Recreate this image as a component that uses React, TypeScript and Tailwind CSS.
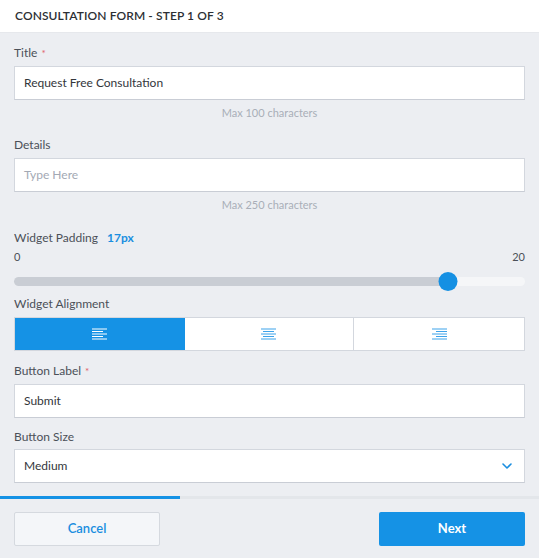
// Consultation form – step 1 of 3

const FONT = { fontFamily: 'Lato, "Open Sans", Arial, sans-serif' };

function AlignIcon({ mode, color }: { mode: 'left' | 'center' | 'right'; color: string }) {
  const short = 11;
  const full = 15;
  const x1 = mode === 'left' ? 0 : mode === 'center' ? (full - short) / 2 : full - short;
  const ys = [1, 3.5, 6, 8.5, 11];
  return (
    <svg width="15" height="12" viewBox="0 0 15 12" fill="none">
      {ys.map((y, i) => (
        <line
          key={i}
          x1={i % 2 === 1 ? x1 : 0}
          x2={i % 2 === 1 ? x1 + short : full}
          y1={y}
          y2={y}
          stroke={color}
          strokeWidth="1"
        />
      ))}
    </svg>
  );
}

function Label({ text, required }: { text: string; required?: boolean }) {
  return (
    <div className="text-[12px] leading-4 text-[#4b5058]">
      {text}
      {required && <span className="ml-1 text-[10px] text-[#e0606b]">*</span>}
    </div>
  );
}

function TextInput({ value, placeholder }: { value?: string; placeholder?: string }) {
  return (
    <div className="mt-[5px] flex h-[34px] items-center border border-[#d3d7de] border-b-[#c9cdd5] bg-white px-[9px] text-[12px]">
      {value ? (
        <span className="text-[#33363b]">{value}</span>
      ) : (
        <span className="text-[#a3a9b4]">{placeholder}</span>
      )}
    </div>
  );
}

function Helper({ text }: { text: string }) {
  return <div className="mt-[5px] text-center text-[11px] leading-4 text-[#a9aeb8]">{text}</div>;
}

export default function App() {
  const padding = 17;
  const pct = (padding / 20) * 100;

  return (
    <div className="flex h-[558px] w-[539px] flex-col bg-[#eceef2]" style={FONT}>
      {/* Header */}
      <div className="flex h-[33px] shrink-0 items-center border-b border-[#e6e8ec] bg-white px-[15px]">
        <span className="text-[12px] font-semibold tracking-[0.1px] text-[#2c2f34]">
          CONSULTATION FORM - STEP 1 OF 3
        </span>
      </div>

      {/* Body */}
      <div className="flex-1 px-[14px] pt-[12px]">
        <Label text="Title" required />
        <TextInput value="Request Free Consultation" />
        <Helper text="Max 100 characters" />

        <div className="mt-4">
          <Label text="Details" />
          <TextInput placeholder="Type Here" />
          <Helper text="Max 250 characters" />
        </div>

        <div className="mt-[17px]">
          <div className="text-[12px] leading-4 text-[#4b5058]">
            Widget Padding
            <span className="ml-[9px] font-bold text-[#1a8ee0]">{padding}px</span>
          </div>
          <div className="mt-[3px] flex justify-between text-[11px] leading-4 text-[#4b5058]">
            <span>0</span>
            <span>20</span>
          </div>
          <div className="relative mt-[7px] flex h-[19px] items-center">
            <div className="h-[9px] w-full rounded-full bg-[#f5f6f8]">
              <div className="h-full rounded-full bg-[#c9cdd4]" style={{ width: `${pct}%` }} />
            </div>
            <div
              className="absolute top-0 h-[19px] w-[19px] -translate-x-1/2 rounded-full bg-[#1590e3]"
              style={{ left: `${pct}%` }}
            />
          </div>
        </div>

        <div className="mt-[5px]">
          <Label text="Widget Alignment" />
          <div className="mt-[5px] grid h-[34px] grid-cols-3 border border-[#d3d7de] bg-white">
            <div className="flex items-center justify-center bg-[#1592e5]">
              <AlignIcon mode="left" color="#ffffff" />
            </div>
            <div className="flex items-center justify-center border-r border-[#d3d7de]">
              <AlignIcon mode="center" color="#3da3ea" />
            </div>
            <div className="flex items-center justify-center">
              <AlignIcon mode="right" color="#3da3ea" />
            </div>
          </div>
        </div>

        <div className="mt-3">
          <Label text="Button Label" required />
          <TextInput value="Submit" />
        </div>

        <div className="mt-[11px]">
          <Label text="Button Size" />
          <div className="mt-[4px] flex h-[34px] items-center justify-between border border-[#d3d7de] border-b-[#c9cdd5] bg-white pl-[9px] pr-[12px] text-[12px] text-[#33363b]">
            <span>Medium</span>
            <svg width="10" height="6" viewBox="0 0 10 6" fill="none">
              <path d="M1 1l4 4 4-4" stroke="#1a8ee0" strokeWidth="1.6" strokeLinecap="round" strokeLinejoin="round" />
            </svg>
          </div>
        </div>
      </div>

      {/* Progress */}
      <div className="h-[3px] shrink-0 bg-[#e3e6ea]">
        <div className="h-full w-1/3 bg-[#1592e5]" />
      </div>

      {/* Footer */}
      <div className="flex h-[59px] shrink-0 items-start justify-between bg-[#eceef2] px-[14px] pt-[13px]">
        <button className="h-[34px] w-[146px] rounded-[2px] border border-[#d5d9df] bg-[#f4f6f9] text-[13px] font-semibold text-[#1a8ee0]">
          Cancel
        </button>
        <button className="h-[34px] w-[146px] rounded-[2px] bg-[#1592e5] text-[13px] font-bold text-white">
          Next
        </button>
      </div>
    </div>
  );
}
